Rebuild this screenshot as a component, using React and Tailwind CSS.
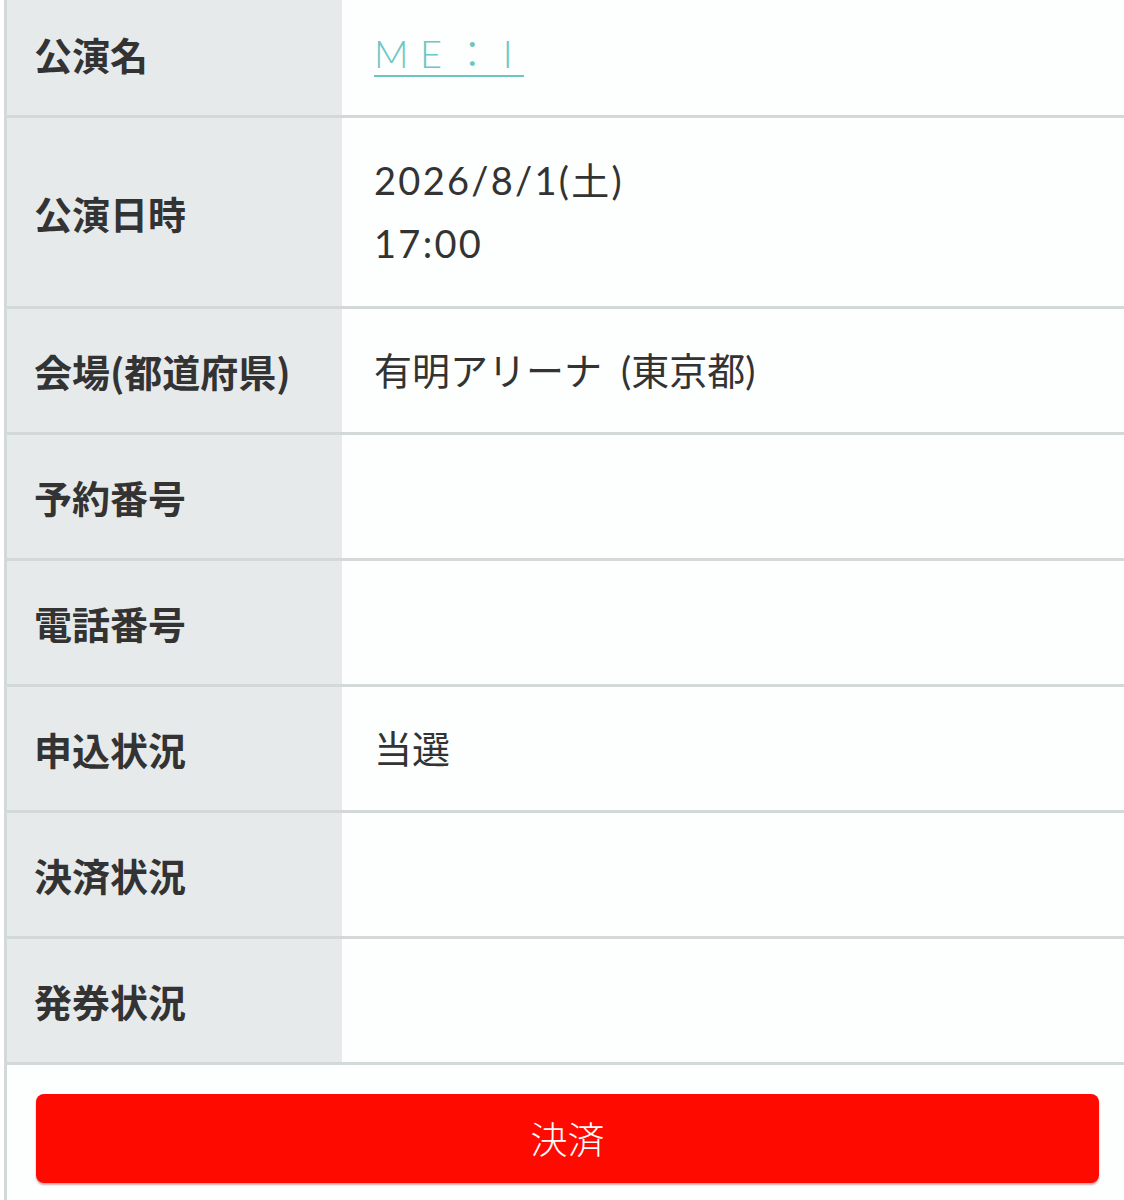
const rows = [
  { label: '公演名', h: 'h-[118px]', pad: 'pb-[8px]', value: <a href="#" className="text-[#6cc6c1] underline underline-offset-[7px] decoration-[2px] tracking-[0.3em] font-light text-[38px]">ME：I</a> },
  { label: '公演日時', h: 'h-[191px]', pad: '', value: <div className="leading-[63px] tracking-[0.06em]">2026/8/1(土)<br />17:00</div> },
  { label: '会場(都道府県)', h: 'h-[126px]', pad: '', value: '有明アリーナ\u2002(東京都)' },
  { label: '予約番号', h: 'h-[126px]', pad: '', value: '' },
  { label: '電話番号', h: 'h-[126px]', pad: '', value: '' },
  { label: '申込状況', h: 'h-[126px]', pad: '', value: '当選' },
  { label: '決済状況', h: 'h-[126px]', pad: '', value: '' },
  { label: '発券状況', h: 'h-[126px]', pad: '', value: '' },
];

export default function App() {
  return (
    <div
      className="w-[1124px] h-[1200px] overflow-hidden bg-white"
      style={{ fontFamily: 'Lato, "Noto Sans CJK JP", sans-serif' }}
    >
      <div className="ml-[4px] h-full border-l-[3px] border-[#d3d8d9] bg-[#fdfefe]">
        {rows.map((r) => (
          <div key={r.label} className={`flex ${r.h} border-b-[3px] border-[#d3d8d9]`}>
            <div className={`w-[335px] shrink-0 flex items-center pl-[27px] ${r.pad} bg-[#e6eaeb] text-[38px] font-bold text-[#333]`} style={{ fontFamily: '"Noto Sans CJK JP", sans-serif' }}>
              {r.label}
            </div>
            <div className={`flex-1 flex items-center pl-[32px] ${r.pad} text-[38px] text-[#333] bg-[#fdfefe]`}>
              {r.value}
            </div>
          </div>
        ))}
        <div className="pt-[29px] pl-[29px] pr-[25px]">
          <button className="w-full h-[89px] rounded-[8px] bg-[#ff0a00] text-white text-[37px] font-light shadow-[0_2px_2px_rgba(120,0,0,0.35)]" style={{ fontFamily: '"Noto Sans CJK JP", sans-serif' }}>
            決済
          </button>
        </div>
      </div>
    </div>
  );
}
